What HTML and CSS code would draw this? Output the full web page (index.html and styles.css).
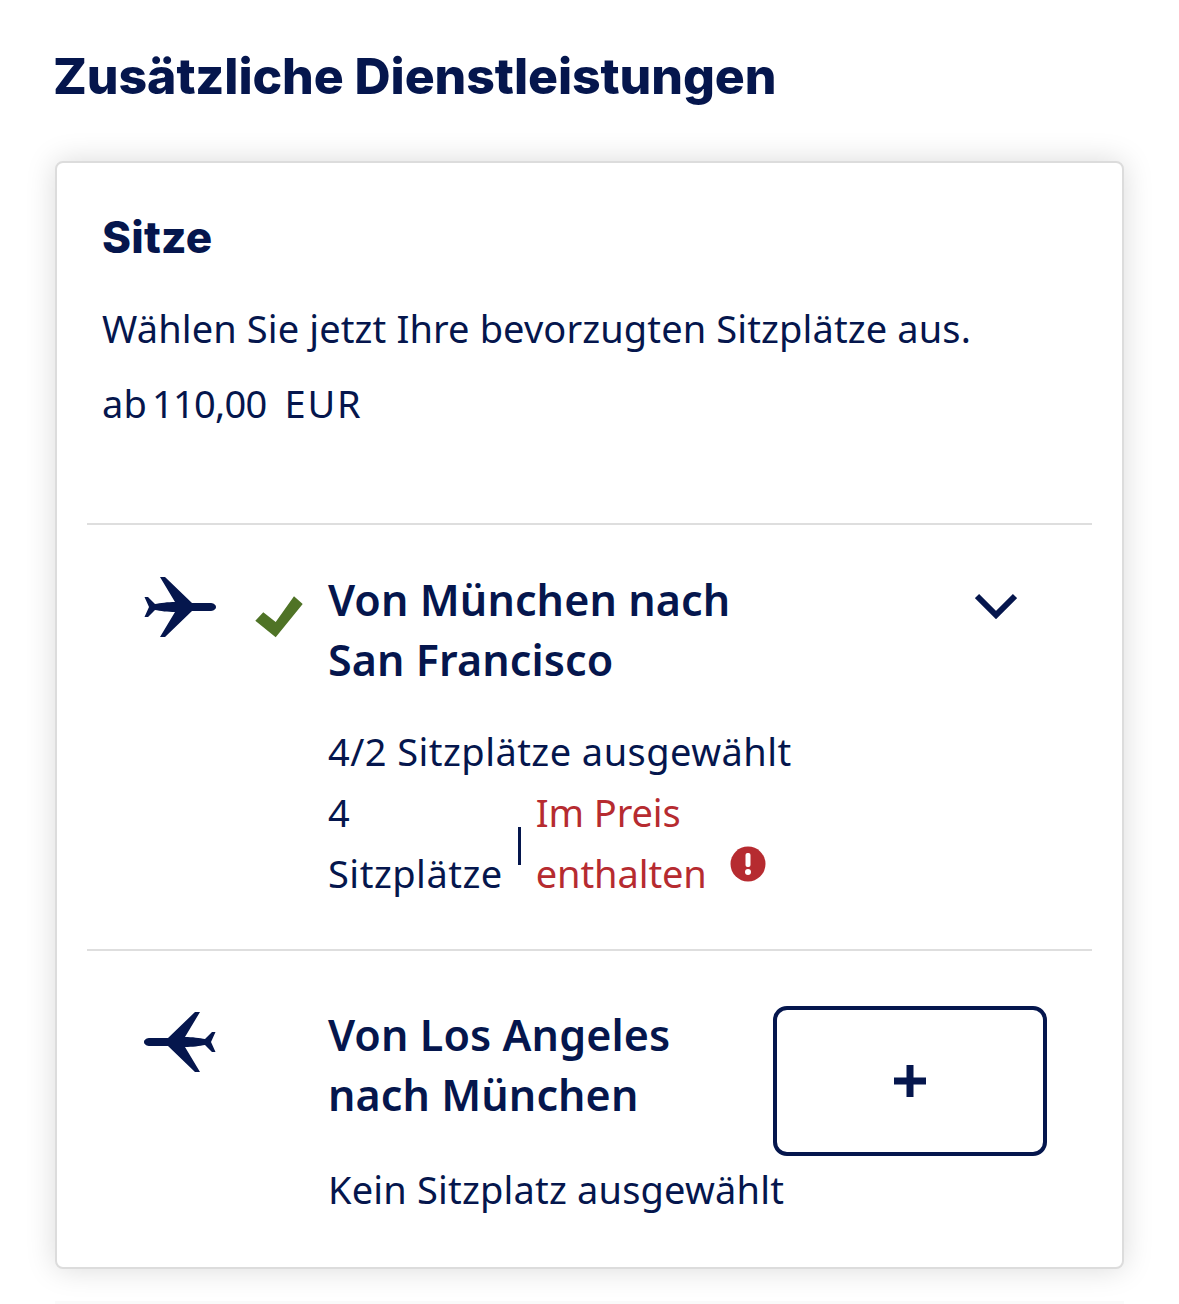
FILE: index.html
```html
<!DOCTYPE html>
<html lang="de">
<head>
<meta charset="utf-8">
<title>Zusätzliche Dienstleistungen</title>
<link rel="stylesheet" href="styles.css">
</head>
<body>
<main class="page">
  <h1 class="title">Zusätzliche Dienstleistungen</h1>
  <section class="card">
    <div class="intro">
      <h2 class="card-title">Sitze</h2>
      <p class="desc">Wählen Sie jetzt Ihre bevorzugten Sitzplätze aus.</p>
      <p class="price"><span>ab</span><span class="amount">110,00</span><span class="currency">EUR</span></p>
    </div>
    <div class="flight flight-out">
      <svg class="plane" viewBox="0 0 72 60"><path d="M72 30c0 2.500-3 4-6 4H48L21 60h-5l15-25c-7 0-15-1-20-2l-7 7H.5l4.500-10L.5 20H4l7 7c5-1 13-2 20-2L16 0h5l27 26h18c3 0 6 1.500 6 4z"/></svg>
      <svg class="check" viewBox="0 0 48 42"><path d="M.3 24.700 8.300 16.300 20.700 26 39 .3 47.700 8 20.700 41.300z"/></svg>
      <div class="info">
        <h3 class="route">Von München nach<br>San Francisco</h3>
        <p class="status">4/2 Sitzplätze ausgewählt</p>
        <div class="seats">
          <span class="seat-count">4<br>Sitzplätze</span>
          <span class="sep"></span>
          <span class="included">Im Preis<br>enthalten</span>
          <svg class="alert" viewBox="0 0 36 36"><circle cx="18" cy="18" r="17.500"/><rect class="mark" x="15.500" y="7" width="5" height="14" rx="2"/><circle class="mark" cx="18" cy="26" r="3"/></svg>
        </div>
      </div>
      <svg class="chevron" viewBox="0 0 42 26"><path d="M2 3l19 19L40 3"/></svg>
    </div>
    <div class="flight flight-back">
      <svg class="plane plane-back" viewBox="0 0 72 60"><path d="M72 30c0 2.500-3 4-6 4H48L21 60h-5l15-25c-7 0-15-1-20-2l-7 7H.5l4.500-10L.5 20H4l7 7c5-1 13-2 20-2L16 0h5l27 26h18c3 0 6 1.500 6 4z"/></svg>
      <div class="info">
        <h3 class="route">Von Los Angeles<br>nach München</h3>
        <p class="status status-none">Kein Sitzplatz ausgewählt</p>
      </div>
      <button class="add" type="button" aria-label="Hinzufügen"><svg viewBox="0 0 32 32"><path d="M12.500 0h7v12.500H32v7H19.500V32h-7V19.500H0v-7h12.500z"/></svg></button>
    </div>
  </section>
  <div class="next"></div>
</main>
</body>
</html>
```
FILE: styles.css
```css
* { box-sizing: border-box; }
html, body { margin: 0; padding: 0; background: #fff; }
body { font-family: "Noto Sans", "Liberation Sans", sans-serif; color: #05164d; height: 1304px; overflow: hidden; }
.page { padding: 43px 55px 0 55px; }
.title { margin: 0 0 52px -2px; font-family: Inter, sans-serif; font-size: 50px; line-height: 66px; font-weight: 800; letter-spacing: -.1px; }
.card { height: 1108px; border: 2px solid #dcdcdc; border-radius: 8px; box-shadow: 0 0 30px rgba(0,0,0,.15); padding: 0 30px; background: #fff; }
.intro { height: 362px; padding: 44px 15px 0; border-bottom: 2px solid #dedede; }
.card-title { margin: 0 0 36px; font-family: Inter, sans-serif; font-size: 44px; line-height: 60px; font-weight: 800; letter-spacing: .2px; }
.desc, .price { margin: 0; font-size: 38px; line-height: 50px; letter-spacing: .12px; }
.price { margin-top: 25px; display: flex; gap: 8px; }
.amount { margin: 0 10px 0 -3px; letter-spacing: -.7px; }
.currency { letter-spacing: 1.8px; }
.flight { position: relative; display: flex; align-items: flex-start; }
.flight-out { height: 426px; padding: 52px 0 0 57px; border-bottom: 2px solid #dedede; }
.flight-back { padding: 61px 0 0 57px; }
.plane { width: 72px; height: 60px; fill: #05164d; flex: none; }
.plane-back { transform: scaleX(-1); margin-right: 112px; }
.check { width: 48px; height: 42px; fill: #4f7326; flex: none; margin: 19px 25px 0 39px; }
.info { flex: none; }
.route { margin: -7px 0 0; font-size: 43px; line-height: 60px; font-weight: 600; letter-spacing: .1px; }
.status { margin: 36px 0 0; font-size: 38px; line-height: 50px; letter-spacing: .45px; }
.status-none { margin-top: 39px; letter-spacing: .18px; }
.seats { display: flex; align-items: center; font-size: 38px; line-height: 61px; margin-top: 6px; letter-spacing: .5px; }
.sep { width: 3px; height: 38px; background: #05164d; margin: 6px 15px 0 15px; }
.included { color: #b62b30; letter-spacing: -.1px; }
.alert { width: 36px; height: 36px; fill: #b62b30; margin: 42px 0 0 23px; }
.alert .mark { fill: #fff; }
.chevron { position: absolute; left: 888px; top: 68px; width: 42px; height: 26px; fill: none; stroke: #05164d; stroke-width: 6; }
.add { position: absolute; left: 686px; top: 55px; width: 274px; height: 150px; border: 4px solid #05164d; border-radius: 14px; background: #fff; padding: 0; display: flex; align-items: center; justify-content: center; }
.add svg { width: 32px; height: 32px; fill: #05164d; }
.next { margin: 32px 0 0; height: 20px; background: #fafafa; }
```
